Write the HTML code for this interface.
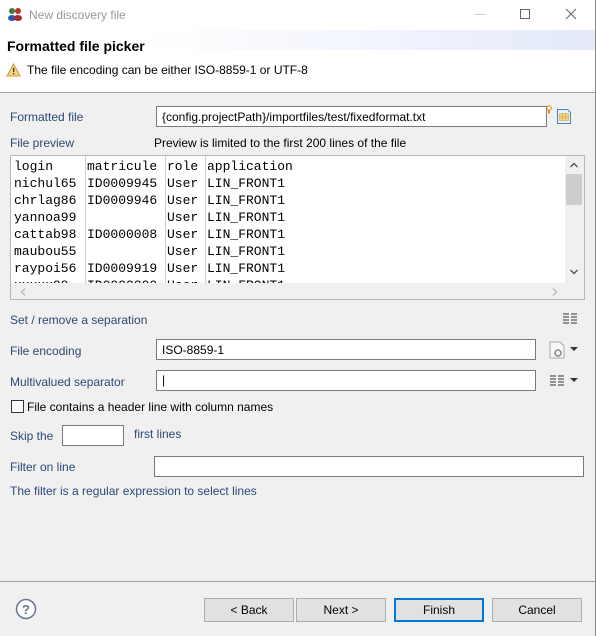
<!DOCTYPE html>
<html><head><style>
*{box-sizing:border-box}
body{margin:0;width:596px;height:636px;background:#f0f0f0;font-family:"Liberation Sans",Arial,sans-serif;font-size:12px;position:relative;overflow:hidden;color:#000}
.a{position:absolute}
.lbl{color:#2c4a75;font-size:12px}
.inp{position:absolute;background:#fff;border:1px solid #7a7a7a;height:21px;padding:3px 5px;font-size:12px}
.btn{position:absolute;top:598px;height:24px;background:#e1e1e1;border:1px solid #adadad;text-align:center;line-height:22px;font-size:12px}
.mono{position:absolute;top:2px;font-family:"Liberation Mono","Courier New",monospace;font-size:13px;line-height:17px;white-space:pre}
</style></head><body>
<div class="a" style="left:0;top:0;width:595px;height:92px;background:#fff"></div>
<div class="a" style="left:30px;top:30px;width:565px;height:20px;background:linear-gradient(to right,#fff,#fff 20%,#f2f5fd 60%,#e3e9f9)"></div>
<div class="a" style="left:595px;top:0;width:1px;height:636px;background:#888"></div>
<svg class="a" style="left:7px;top:6px" width="16" height="16"><circle cx="5" cy="5" r="3" fill="#3a7a3a"/><circle cx="11" cy="5" r="3" fill="#c03030"/><ellipse cx="5" cy="12" rx="4" ry="3" fill="#3050b0"/><ellipse cx="11" cy="12" rx="4" ry="3" fill="#b02828"/></svg>
<div class="a" style="left:29px;top:8px;color:#999;font-size:12px">New discovery file</div>
<div class="a" style="left:475px;top:14px;width:11px;height:1px;background:#ccc"></div>
<div class="a" style="left:520px;top:9px;width:10px;height:10px;border:1px solid #666"></div>
<svg class="a" style="left:565px;top:8px" width="12" height="12"><path d="M1 1L11 11M11 1L1 11" stroke="#666" stroke-width="1"/></svg>
<div class="a" style="left:7px;top:38px;font-weight:bold;font-size:14px">Formatted file picker</div>
<svg class="a" style="left:6px;top:63px" width="15" height="14"><path d="M7.5 1L14 13H1Z" fill="#f6d27a" stroke="#c89a3a"/><rect x="7" y="5" width="1.2" height="4" fill="#333"/><rect x="7" y="10" width="1.2" height="1.3" fill="#333"/></svg>
<div class="a" style="left:27px;top:63px;font-size:12px">The file encoding can be either ISO-8859-1 or UTF-8</div>
<div class="a" style="left:0;top:92px;width:595px;height:1px;background:#a0a0a0"></div>

<div class="a lbl" style="left:10px;top:110px">Formatted file</div>
<div class="inp" style="left:156px;top:106px;width:391px">{config.projectPath}/importfiles/test/fixedformat.txt</div>
<svg class="a" style="left:546px;top:105px" width="6" height="9"><circle cx="3" cy="3" r="2.3" fill="#fff" stroke="#e08a10"/><rect x="2" y="5.5" width="2" height="3" fill="#e08a10"/></svg>
<svg class="a" style="left:556px;top:108px" width="16" height="17"><path d="M1.5 1.5h10l3 3v11h-13z" fill="#eaf2fb" stroke="#4a7fc0"/><rect x="3.5" y="5.5" width="9" height="7" fill="#f5dc8a" stroke="#c8a040" stroke-width=".6"/><path d="M3.5 8h9M3.5 10h9M6.5 5.5v7M9.5 5.5v7" stroke="#c8a040" stroke-width=".5"/></svg>
<div class="a lbl" style="left:10px;top:136px">File preview</div>
<div class="a" style="left:154px;top:136px">Preview is limited to the first 200 lines of the file</div>

<div class="a" style="left:10px;top:155px;width:575px;height:145px;border:1px solid #b8b8b8;background:#fff;overflow:hidden">
 <div class="a" style="left:74px;top:0;width:1px;height:127px;background:#ccc"></div>
 <div class="a" style="left:154px;top:0;width:1px;height:127px;background:#ccc"></div>
 <div class="a" style="left:194px;top:0;width:1px;height:127px;background:#ccc"></div>
 <div class="mono" style="left:3px">login
nichul65
chrlag86
yannoa99
cattab98
maubou55
raypoi56
xxxxx99</div>
 <div class="mono" style="left:76px">matricule
ID0009945
ID0009946

ID0000008

ID0009919
ID0000000</div>
 <div class="mono" style="left:156px">role
User
User
User
User
User
User
User</div>
 <div class="mono" style="left:196px">application
LIN_FRONT1
LIN_FRONT1
LIN_FRONT1
LIN_FRONT1
LIN_FRONT1
LIN_FRONT1
LIN_FRONT1</div>
 <div class="a" style="left:554px;top:0;width:19px;height:127px;background:#f0f0f0"></div>
 <div class="a" style="left:555px;top:18px;width:16px;height:31px;background:#cdcdcd"></div>
 <svg class="a" style="left:558px;top:5px" width="10" height="8"><path d="M1.5 6L5 2.5 8.5 6" fill="none" stroke="#555" stroke-width="1.4"/></svg>
 <svg class="a" style="left:558px;top:112px" width="10" height="8"><path d="M1.5 2L5 5.5 8.5 2" fill="none" stroke="#555" stroke-width="1.4"/></svg>
 <div class="a" style="left:0;top:127px;width:573px;height:16px;background:#f0f0f0"></div>
 <svg class="a" style="left:8px;top:131px" width="8" height="10"><path d="M6 1.5L2.5 5 6 8.5" fill="none" stroke="#bbb" stroke-width="1.4"/></svg>
 <svg class="a" style="left:540px;top:131px" width="8" height="10"><path d="M2 1.5L5.5 5 2 8.5" fill="none" stroke="#bbb" stroke-width="1.4"/></svg>
</div>

<div class="a lbl" style="left:10px;top:313px">Set / remove a separation</div>
<svg class="a" style="left:563px;top:313px" width="14" height="12"><path d="M0 1h6M0 4h6M0 7h6M0 10h6M8 1h6M8 4h6M8 7h6M8 10h6" stroke="#333" stroke-width="1"/></svg>
<div class="a lbl" style="left:10px;top:344px">File encoding</div>
<div class="inp" style="left:156px;top:339px;width:380px">ISO-8859-1</div>
<svg class="a" style="left:549px;top:341px" width="16" height="18"><path d="M1 1h10l4 4v12H1z" fill="#f6f6f6" stroke="#aaa"/><circle cx="9" cy="12" r="3" fill="none" stroke="#888" stroke-width="1.5"/></svg>
<div class="a" style="left:570px;top:347px;border:4px solid transparent;border-top:4px solid #333;border-bottom:0"></div>
<div class="a lbl" style="left:10px;top:375px">Multivalued separator</div>
<div class="inp" style="left:156px;top:370px;width:380px;padding-top:2px">|</div>
<svg class="a" style="left:550px;top:375px" width="14" height="12"><path d="M0 1h6M0 4h6M0 7h6M0 10h6M8 1h6M8 4h6M8 7h6M8 10h6" stroke="#333" stroke-width="1"/></svg>
<div class="a" style="left:570px;top:378px;border:4px solid transparent;border-top:4px solid #333;border-bottom:0"></div>
<div class="a" style="left:11px;top:400px;width:13px;height:13px;border:1px solid #333;background:#fff"></div>
<div class="a" style="left:27px;top:400px">File contains a header line with column names</div>
<div class="a lbl" style="left:10px;top:429px">Skip the</div>
<div class="inp" style="left:62px;top:425px;width:62px;height:21px"></div>
<div class="a lbl" style="left:134px;top:427px">first lines</div>
<div class="a lbl" style="left:10px;top:460px">Filter on line</div>
<div class="inp" style="left:154px;top:456px;width:430px"></div>
<div class="a lbl" style="left:10px;top:484px">The filter is a regular expression to select lines</div>

<div class="a" style="left:0;top:581px;width:595px;height:1px;background:#a0a0a0"></div>
<svg class="a" style="left:15px;top:598px" width="22" height="22"><circle cx="11" cy="11" r="9.5" fill="#fff" stroke="#6a7690" stroke-width="1.5"/><text x="11" y="16" text-anchor="middle" font-family="Liberation Sans" font-weight="bold" font-size="13" fill="#6a7690">?</text></svg>
<div class="btn" style="left:204px;width:90px">&lt; Back</div>
<div class="btn" style="left:296px;width:90px">Next &gt;</div>
<div class="btn" style="left:394px;width:90px;border:2px solid #0078d7;line-height:20px">Finish</div>
<div class="btn" style="left:492px;width:90px">Cancel</div>
</body></html>
